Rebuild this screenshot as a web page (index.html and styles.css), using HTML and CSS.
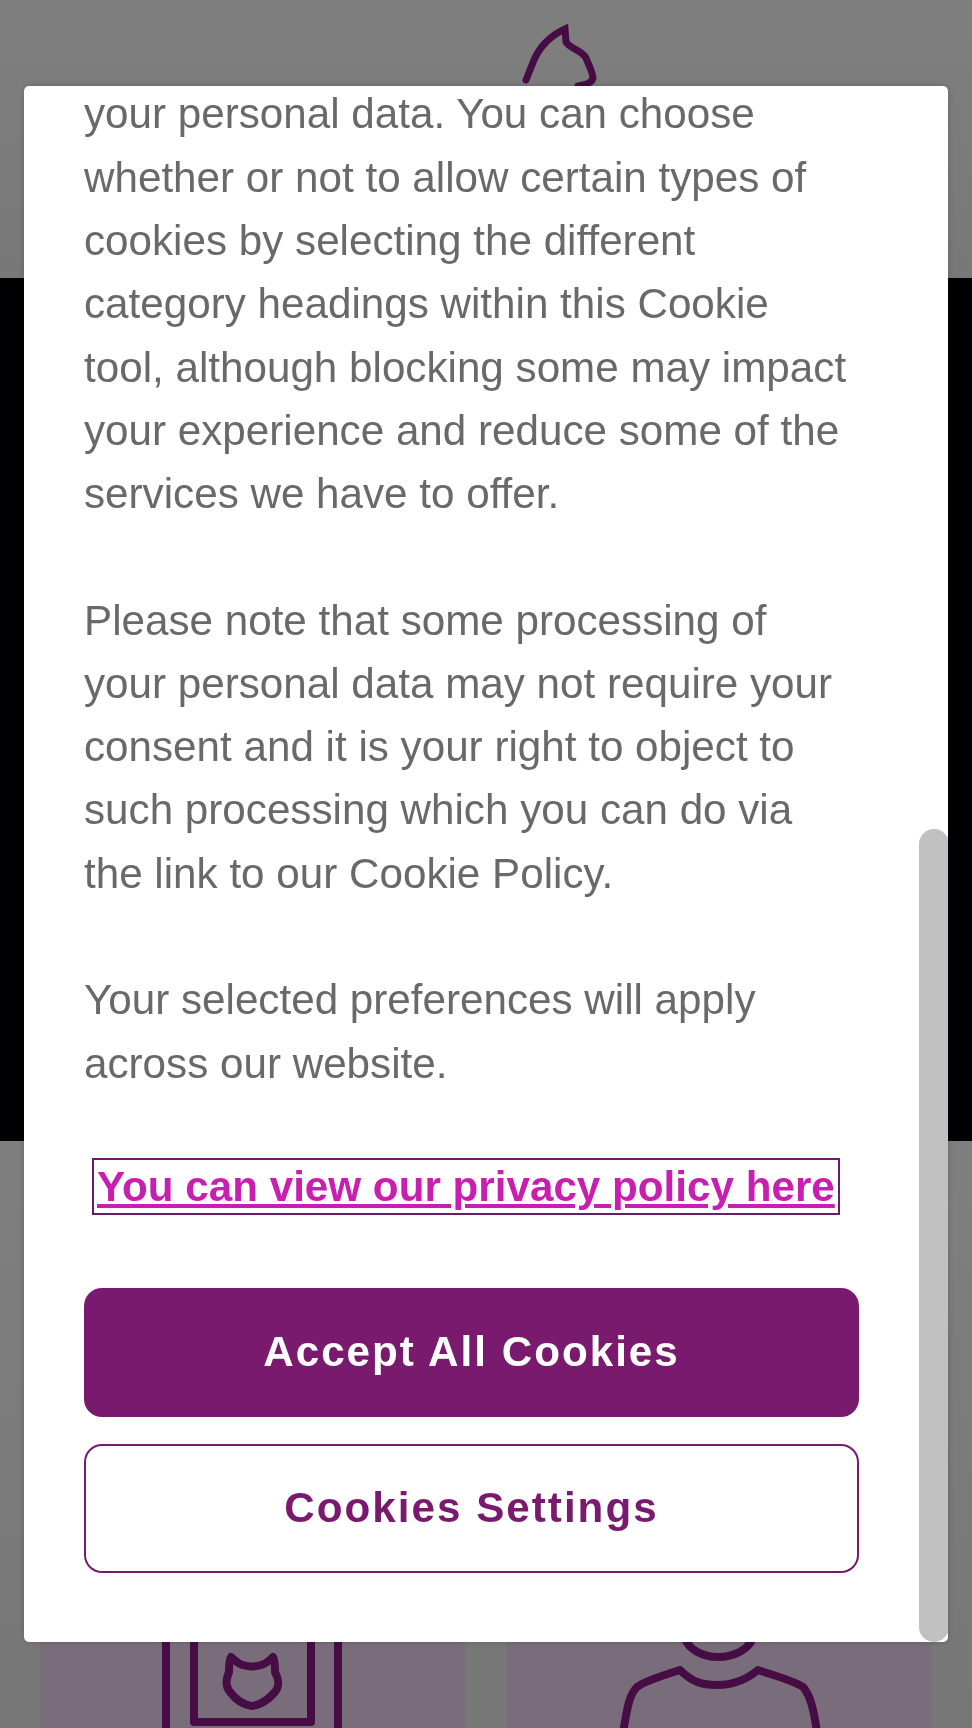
FILE: index.html
```html
<!DOCTYPE html>
<html lang="en">
<head>
<meta charset="utf-8">
<title>Cookie preferences</title>
<link rel="stylesheet" href="styles.css">
</head>
<body>
<div class="page">
  <header class="site-header">
    <svg class="logo" viewBox="520 22 80 70" aria-hidden="true"><path d="M526 80 L534 60 C540 46 550 36 565 29 L566 42 C570 49 582 50 586 58 C589 66 592 70 593 78 C592 83 586 85 578 86" /></svg>
  </header>
  <section class="hero"></section>
  <section class="cards">
    <div class="card">
      <svg class="card-icon card-icon-left" viewBox="160 1640 185 88" aria-hidden="true">
        <path d="M166 1630 V1740 M338 1630 V1740" />
        <path d="M194 1630 V1722 H311 V1630" />
        <path d="M231 1657 C236 1661 238 1664 243 1665 C249 1667 255 1667 261 1665 C266 1664 269 1661 273 1657 C275 1660 275 1668 275 1672 C279 1680 280 1686 275 1692 C268 1700 260 1705 252 1706 C244 1705 236 1700 230 1692 C225 1686 226 1680 229 1672 C229 1668 229 1660 231 1657 Z" />
      </svg>
    </div>
    <div class="card">
      <svg class="card-icon card-icon-right" viewBox="615 1640 210 88" aria-hidden="true">
        <path d="M684 1636 C692 1664 744 1664 754 1636" />
        <path d="M623 1732 C627 1712 628 1696 637 1687 C646 1680 665 1675 680 1670 C692 1682 702 1685 717 1685 C734 1685 746 1680 758 1670 C772 1675 792 1680 803 1687 C811 1696 814 1712 817 1732" />
      </svg>
    </div>
  </section>
</div>
<div class="backdrop">
  <div class="modal" role="dialog" aria-label="Cookie preferences">
    <div class="modal-body">
      <p class="copy">your personal data. You can choose whether or not to allow certain types of cookies by selecting the different category headings within this Cookie tool, although blocking some may impact your experience and reduce some of the services we have to offer.</p>
      <p class="copy">Please note that some processing of your personal data may not require your consent and it is your right to object to such processing which you can do via the link to our Cookie Policy.</p>
      <p class="copy">Your selected preferences will apply across our website.</p>
      <a class="policy-link" href="#">You can view our privacy policy here</a>
      <button class="btn btn-primary" type="button">Accept All Cookies</button>
      <button class="btn btn-secondary" type="button">Cookies Settings</button>
    </div>
    <div class="scrollbar"><div class="scrollbar-thumb"></div></div>
  </div>
</div>
</body>
</html>
```
FILE: styles.css
```css
* { box-sizing: border-box; }
html, body { margin: 0; padding: 0; height: 1728px; overflow: hidden; }
body { font-family: "Liberation Sans", Arial, sans-serif; background: #fff; }

.page { display: flex; flex-direction: column; height: 1728px; }
.site-header { height: 278px; background: linear-gradient(#ffffff, #f0f0f0); display: flex; justify-content: center; align-items: flex-start; }
.logo { width: 80px; height: 70px; margin: 22px 0 0 148px; fill: none; stroke: #8a1a88; stroke-width: 7; stroke-linecap: round; stroke-linejoin: miter; }
.hero { height: 863px; background: #020208; }
.cards { flex: 1; background: linear-gradient(#ffffff, #eeeeee); display: flex; gap: 42px; padding: 0 40px; align-items: flex-end; }
.card { flex: 1; height: 300px; background: #f4dbf6; display: flex; justify-content: center; align-items: flex-end; overflow: hidden; }
.card-icon { height: 88px; fill: none; stroke: #8a1a88; stroke-width: 8; stroke-linejoin: round; }
.card-icon-left { width: 185px; }
.card-icon-right { width: 210px; }

.backdrop { position: fixed; inset: 0; background: rgba(0,0,0,.5); }
.modal { position: absolute; left: 24px; top: 86px; width: 924px; height: 1555.5px; background: #fff; border-radius: 5px; box-shadow: 0 0 6px rgba(0,0,0,.2); display: flex; overflow: hidden; }
.modal-body { flex: 1; padding: 0 60px; display: flex; flex-direction: column; align-items: flex-start; }
.copy { margin: 0 0 63.28px; width: 768px; font-size: 42.19px; line-height: 63.28px; color: #696969; }
.copy:first-child { margin-top: -3.6px; }
.copy:last-of-type { margin-bottom: 0; }
.policy-link { margin: 63.6px 0 0 8px; border: 2px solid #6a1b6a; padding: 0 3px; font-size: 42.19px; line-height: 53px; font-weight: 700; color: #c81fb0; text-decoration: underline; white-space: nowrap; }
.btn { width: 775px; height: 129px; border-radius: 18px; font-family: inherit; font-size: 42.19px; font-weight: 700; letter-spacing: 2px; flex: none; }
.btn-primary { margin-top: 72.5px; background: #7a1a6e; border: 0; color: #fff; }
.btn-secondary { margin-top: 27px; background: #fff; border: 2.5px solid #7a1a6e; color: #7a1a6e; }
.scrollbar { width: 30px; flex: none; position: relative; }
.scrollbar-thumb { position: absolute; left: 0; right: 0; top: 743px; bottom: 0; background: #c1c1c1; border-radius: 15px; }
```
